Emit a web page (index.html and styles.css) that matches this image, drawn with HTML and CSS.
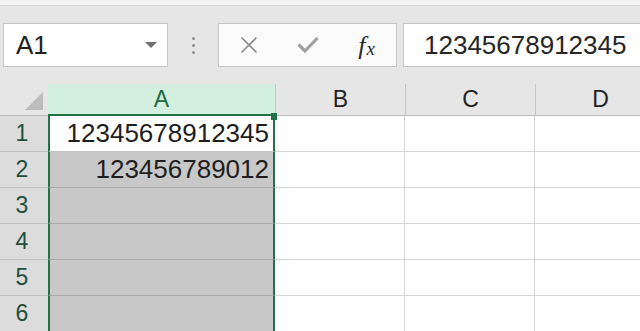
FILE: index.html
```html
<!DOCTYPE html>
<html lang="en">
<head>
    <meta charset="UTF-8">
    <meta name="viewport" content="width=device-width, initial-scale=1.0">
    <title>Sheet1</title>
    <link rel="stylesheet" href="styles.css">
</head>
<body>
    <div class="top-strip"></div>

    <div class="toolbar">
        <div class="name-box">
            <span>A1</span>
            <svg class="caret" width="12" height="6" viewBox="0 0 12 6"><path d="M0 0 H12 L6 6 Z" fill="#6f6f6f"/></svg>
        </div>
        <div class="grip"><i></i><i></i><i></i></div>
        <div class="fx-buttons">
            <span class="slot">
                <svg width="18" height="18" viewBox="0 0 18 18"><path d="M1.5 1.5 L16.5 16.5 M16.5 1.5 L1.5 16.5" stroke="#8a8a8a" stroke-width="1.7" fill="none"/></svg>
            </span>
            <span class="slot">
                <svg width="22" height="18" viewBox="0 0 22 18"><path d="M1.5 8.5 L8 15 L20.5 2" stroke="#a0a0a0" stroke-width="3.2" fill="none"/></svg>
            </span>
            <span class="slot fx"><i>f</i><small>x</small></span>
        </div>
        <div class="formula">12345678912345</div>
    </div>

    <div class="sheet">
        <div class="corner"><svg width="18" height="18" viewBox="0 0 18 18"><path d="M18 0 V18 H0 Z" fill="#bdbdbd"/></svg></div>
        <div class="col-head selected">A</div>
        <div class="col-head">B</div>
        <div class="col-head">C</div>
        <div class="col-head">D</div>

        <div class="row-head">1</div>
        <div class="cell col-a active">12345678912345<span class="fill-handle"></span></div>
        <div class="cell"></div>
        <div class="cell"></div>
        <div class="cell"></div>

        <div class="row-head">2</div>
        <div class="cell col-a">123456789012</div>
        <div class="cell"></div>
        <div class="cell"></div>
        <div class="cell"></div>

        <div class="row-head">3</div>
        <div class="cell col-a"></div>
        <div class="cell"></div>
        <div class="cell"></div>
        <div class="cell"></div>

        <div class="row-head">4</div>
        <div class="cell col-a"></div>
        <div class="cell"></div>
        <div class="cell"></div>
        <div class="cell"></div>

        <div class="row-head">5</div>
        <div class="cell col-a"></div>
        <div class="cell"></div>
        <div class="cell"></div>
        <div class="cell"></div>

        <div class="row-head">6</div>
        <div class="cell col-a"></div>
        <div class="cell"></div>
        <div class="cell"></div>
        <div class="cell"></div>
    </div>
</body>
</html>
```

FILE: styles.css
```css
* {
    box-sizing: border-box;
}

body {
    margin: 0;
    width: 640px;
    height: 331px;
    overflow: hidden;
    background: #ffffff;
    font-family: "Liberation Sans", Arial, sans-serif;
    color: #262626;
}

.top-strip {
    height: 6px;
    background: #f3f3f3;
    border-bottom: 1px solid #d6d6d6;
}

.toolbar {
    display: flex;
    align-items: center;
    height: 78px;
    padding: 0 0 0 3px;
    background: #e6e6e6;
    white-space: nowrap;
}

.toolbar > * {
    flex-shrink: 0;
}

.name-box {
    display: flex;
    align-items: center;
    justify-content: space-between;
    width: 165px;
    height: 44px;
    padding: 0 10px 0 12px;
    background: #ffffff;
    border: 1px solid #c6c6c6;
    font-size: 26px;
    color: #222222;
}

.name-box span {
    margin-top: 1px;
}

.caret {
    margin-bottom: 1px;
}

.grip {
    display: flex;
    flex-direction: column;
    align-items: center;
    gap: 4px;
    width: 50px;
}

.grip i {
    width: 3px;
    height: 3px;
    border-radius: 50%;
    background: #8c8c8c;
}

.fx-buttons {
    display: flex;
    align-items: center;
    width: 179px;
    height: 44px;
    background: #fbfbfb;
    border: 1px solid #c6c6c6;
}

.slot {
    display: flex;
    align-items: center;
    justify-content: center;
    width: 59px;
    height: 100%;
}

.fx {
    font-family: "Liberation Serif", "Times New Roman", serif;
    color: #2a2a2a;
    padding-top: 2px;
}

.fx i {
    font-size: 26px;
}

.fx small {
    font-style: italic;
    font-size: 19px;
    margin-left: 1px;
    margin-top: 6px;
}

.formula {
    display: flex;
    align-items: center;
    width: 260px;
    height: 44px;
    margin-left: 6px;
    padding-left: 20px;
    background: #ffffff;
    border: 1px solid #c6c6c6;
    border-right: none;
    font-size: 26px;
    color: #262626;
}

.sheet {
    display: grid;
    grid-template-columns: 48px 227px 130px 130px 130px;
    grid-template-rows: 32px;
    grid-auto-rows: 36px;
    width: 665px;
}

.corner {
    display: flex;
    align-items: flex-end;
    justify-content: flex-end;
    padding: 0 5px 5px 0;
    background: #e6e6e6;
    border-bottom: 1px solid #bdbdbd;
}

.col-head {
    display: flex;
    align-items: center;
    justify-content: center;
    background: #e6e6e6;
    border-left: 1px solid #c6c6c6;
    border-bottom: 1px solid #bdbdbd;
    font-size: 23px;
    color: #222222;
}

.col-head.selected {
    background: #d3efe0;
    color: #1e6b41;
    border-left: none;
    border-bottom: 2px solid #217346;
}

.row-head {
    display: flex;
    align-items: center;
    justify-content: center;
    padding-right: 4px;
    background: #dcdcdc;
    border-bottom: 1px solid #c2c2c2;
    font-size: 23px;
    color: #1f4f3b;
}

.cell {
    display: flex;
    align-items: center;
    justify-content: flex-end;
    padding-right: 4px;
    border-right: 1px solid #d6d6d6;
    border-bottom: 1px solid #d6d6d6;
    font-size: 26px;
    color: #1e1e1e;
}

.col-a {
    position: relative;
    background: #c8c8c8;
    border-left: 2px solid #217346;
    border-right: 2px solid #217346;
    border-bottom-color: #a9a9a9;
}

.col-a.active {
    background: #ffffff;
    border-bottom-color: #c4c4c4;
}

.fill-handle {
    position: absolute;
    top: -3px;
    right: -4px;
    width: 6px;
    height: 7px;
    background: #217346;
}
```
